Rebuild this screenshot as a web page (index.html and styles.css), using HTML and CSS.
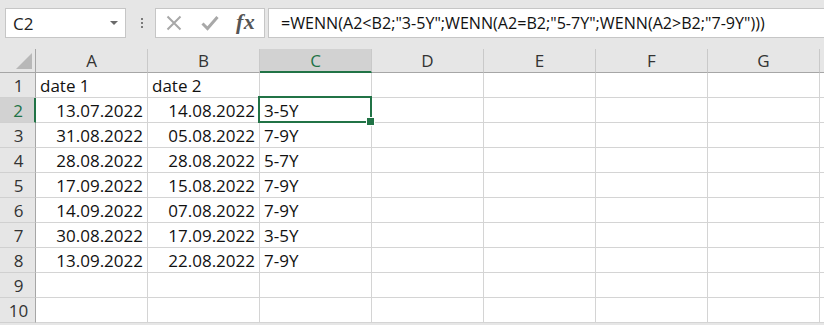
FILE: index.html
```html
<!DOCTYPE html>
<html>
<head>
<meta charset="utf-8">
<link rel="stylesheet" href="styles.css">
</head>
<body>
<div class="toolbar">
  <div class="namebox"><span class="ref">C2</span><span class="caret"></span></div>
  <div class="dots"><i></i><i></i><i></i></div>
  <div class="btns">
    <svg class="ic" width="16" height="16" viewBox="0 0 16 16"><path d="M1.5 1.5 L14.5 14.5 M14.5 1.5 L1.5 14.5" stroke="#a8a8a8" stroke-width="2" fill="none"/></svg>
    <svg class="ic" width="18" height="16" viewBox="0 0 18 16"><path d="M1.5 8.5 L6.5 13.5 L16.5 2" stroke="#a8a8a8" stroke-width="3" fill="none" stroke-linejoin="miter"/></svg>
    <span class="fx">fx</span>
  </div>
  <div class="formula">=WENN(A2&lt;B2;"3-5Y";WENN(A2=B2;"5-7Y";WENN(A2&gt;B2;"7-9Y")))</div>
</div>
<div class="sheet">
  <div class="hd corner"><span class="tri"></span></div>
  <div class="hd col">A</div><div class="hd col">B</div><div class="hd col sel">C</div><div class="hd col">D</div><div class="hd col">E</div><div class="hd col">F</div><div class="hd col">G</div><div class="hd col last"></div>

  <div class="hd row">1</div><div class="c">date 1</div><div class="c">date 2</div><div class="c"></div><div class="c"></div><div class="c"></div><div class="c"></div><div class="c"></div><div class="c"></div>
  <div class="hd row sel">2</div><div class="c n">13.07.2022</div><div class="c n">14.08.2022</div><div class="c active">3-5Y</div><div class="c"></div><div class="c"></div><div class="c"></div><div class="c"></div><div class="c"></div>
  <div class="hd row">3</div><div class="c n">31.08.2022</div><div class="c n">05.08.2022</div><div class="c">7-9Y</div><div class="c"></div><div class="c"></div><div class="c"></div><div class="c"></div><div class="c"></div>
  <div class="hd row">4</div><div class="c n">28.08.2022</div><div class="c n">28.08.2022</div><div class="c">5-7Y</div><div class="c"></div><div class="c"></div><div class="c"></div><div class="c"></div><div class="c"></div>
  <div class="hd row">5</div><div class="c n">17.09.2022</div><div class="c n">15.08.2022</div><div class="c">7-9Y</div><div class="c"></div><div class="c"></div><div class="c"></div><div class="c"></div><div class="c"></div>
  <div class="hd row">6</div><div class="c n">14.09.2022</div><div class="c n">07.08.2022</div><div class="c">7-9Y</div><div class="c"></div><div class="c"></div><div class="c"></div><div class="c"></div><div class="c"></div>
  <div class="hd row">7</div><div class="c n">30.08.2022</div><div class="c n">17.09.2022</div><div class="c">3-5Y</div><div class="c"></div><div class="c"></div><div class="c"></div><div class="c"></div><div class="c"></div>
  <div class="hd row">8</div><div class="c n">13.09.2022</div><div class="c n">22.08.2022</div><div class="c">7-9Y</div><div class="c"></div><div class="c"></div><div class="c"></div><div class="c"></div><div class="c"></div>
  <div class="hd row">9</div><div class="c"></div><div class="c"></div><div class="c"></div><div class="c"></div><div class="c"></div><div class="c"></div><div class="c"></div><div class="c"></div>
  <div class="hd row">10</div><div class="c"></div><div class="c"></div><div class="c"></div><div class="c"></div><div class="c"></div><div class="c"></div><div class="c"></div><div class="c"></div>
</div>
</body>
</html>
```

FILE: styles.css
```css
* { box-sizing: border-box; }
html, body { margin: 0; padding: 0; }
body {
  background: #e6e6e6;
  font-family: "Open Sans", "Liberation Sans", sans-serif;
  color: #1a1a1a;
  width: 824px;
  height: 325px;
  overflow: hidden;
}
.toolbar {
  height: 49px;
  padding: 8px 0 0 5px;
  display: flex;
  align-items: flex-start;
}
.namebox {
  width: 121px;
  height: 30px;
  background: #fff;
  border: 1px solid #c6c6c6;
  display: flex;
  align-items: center;
  justify-content: space-between;
  padding: 0 7px 0 7px;
}
.ref { font-size: 17px; color: #222; }
.caret {
  width: 0; height: 0;
  border-left: 4px solid transparent;
  border-right: 4px solid transparent;
  border-top: 4px solid #6a6a6a;
}
.dots {
  width: 26px;
  height: 30px;
  display: flex;
  flex-direction: column;
  align-items: center;
  justify-content: center;
  gap: 2px;
  margin-left: 3px;
}
.dots i { display: block; width: 2px; height: 2px; background: #7a7a7a; }
.btns {
  width: 110px;
  height: 30px;
  background: #fff;
  border: 1px solid #c6c6c6;
  display: flex;
  align-items: center;
  padding-left: 10px;
  gap: 19px;
}
.fx {
  font-family: "Liberation Serif", serif;
  font-style: italic;
  font-weight: bold;
  font-size: 22px;
  color: #555;
  margin-left: -2px;
  letter-spacing: 0.5px;
  line-height: 1;
  margin-top: -2px;
}
.formula {
  flex: 1;
  margin-left: 3px;
  height: 30px;
  background: #fff;
  border: 1px solid #c6c6c6;
  border-right: none;
  font-size: 16.1px;
  line-height: 28px;
  padding-left: 12px;
  white-space: nowrap;
  color: #111;
}
.sheet {
  display: grid;
  grid-template-columns: 36px repeat(7, 112px) 1fr;
  grid-template-rows: 24px repeat(10, 25px);
  background: #fff;
  font-size: 17px;
}
.hd {
  background: #e6e6e6;
  color: #333;
  display: flex;
  align-items: center;
  justify-content: center;
}
.hd.col {
  border-right: 1px solid #c9c9c9;
  border-bottom: 1px solid #a6a6a6;
}
.hd.col.last { border-right: none; }
.corner {
  border-right: 1px solid #a6a6a6;
  border-bottom: 1px solid #a6a6a6;
  position: relative;
}
.tri {
  position: absolute;
  right: 3px;
  bottom: 3px;
  width: 0; height: 0;
  border-left: 16px solid transparent;
  border-bottom: 16px solid #b8b8b8;
}
.hd.row {
  border-right: 1px solid #a6a6a6;
  border-bottom: 1px solid #d0d0d0;
  justify-content: center;
  padding-left: 2px;
}
.hd.sel { background: #d2d2d2; color: #217346; }
.hd.col.sel { border-bottom: 2px solid #217346; }
.hd.row.sel { border-right: 2px solid #217346; }
.c {
  border-right: 1px solid #d4d4d4;
  border-bottom: 1px solid #d4d4d4;
  display: flex;
  align-items: center;
  padding: 0 4px;
  white-space: nowrap;
  color: #111;
}
.c.n { justify-content: flex-end; }
.c.active { position: relative; }
.c.active::after {
  content: "";
  position: absolute;
  left: -2px; top: -2px; right: -1px; bottom: -1px;
  border: 2px solid #217346;
}
.c.active::before {
  content: "";
  position: absolute;
  right: -4px; bottom: -4px;
  width: 7px; height: 7px;
  background: #217346;
  border: 1px solid #fff;
  z-index: 1;
}
```
